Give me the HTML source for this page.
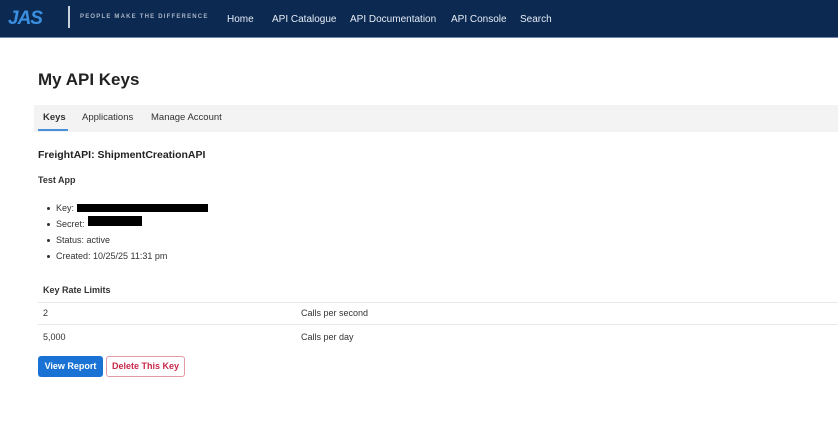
<!DOCTYPE html>
<html><head><meta charset="utf-8"><style>
*{margin:0;padding:0;box-sizing:border-box}
body{width:838px;height:424px;background:#fff;font-family:"Liberation Sans",sans-serif;color:#222;position:relative;overflow:hidden}
.hdr{position:absolute;left:0;top:0;width:838px;height:38px;background:#0b2951;border-bottom:1px solid #6f86a8}
.abs{position:absolute;white-space:nowrap}
.nav{color:#e6ecf5;font-size:10px;top:14px}
.tabbar{position:absolute;left:34px;top:105px;width:804px;height:27px;background:#f3f3f3}
.tab{font-size:9.5px;color:#333;top:112px}
.sm{font-size:9px;color:#333}
.b{font-weight:bold}
.bar{position:absolute;background:#000}
.line{position:absolute;left:38px;width:800px;height:1px;background:#e8e8e8}
.dot{position:absolute;width:3px;height:3px;border-radius:50%;background:#333}
</style></head><body>
<div class="hdr"></div>
<div class="abs" style="left:8px;top:8px;color:#3a8fe0;font-weight:bold;font-style:italic;font-size:19px;letter-spacing:-1px">JAS</div>
<div class="abs" style="left:68px;top:6px;width:2px;height:22px;background:#c8d0dc"></div>
<div class="abs" style="left:80px;top:14px;color:#a8b4c6;font-size:6px;font-weight:bold;letter-spacing:1.2px">PEOPLE MAKE THE DIFFERENCE</div>
<div class="abs nav" style="left:227px">Home</div>
<div class="abs nav" style="left:272px">API Catalogue</div>
<div class="abs nav" style="left:350px">API Documentation</div>
<div class="abs nav" style="left:451px">API Console</div>
<div class="abs nav" style="left:520px">Search</div>
<div class="abs b" style="left:38px;top:70px;font-size:17px;color:#222">My API Keys</div>
<div class="tabbar"></div>
<div class="abs tab b" style="left:43px">Keys</div>
<div class="abs" style="left:38px;top:129px;width:30px;height:2px;background:#4a90d9"></div>
<div class="abs tab" style="left:82px">Applications</div>
<div class="abs tab" style="left:151px">Manage Account</div>
<div class="abs b" style="left:38px;top:149px;font-size:10.5px">FreightAPI: ShipmentCreationAPI</div>
<div class="abs b sm" style="left:38px;top:175px">Test App</div>
<div class="dot" style="left:47px;top:207px"></div>
<div class="abs sm" style="left:56px;top:203px">Key:</div>
<div class="bar" style="left:77px;top:204px;width:131px;height:8px"></div>
<div class="dot" style="left:47px;top:223px"></div>
<div class="abs sm" style="left:56px;top:219px">Secret:</div>
<div class="bar" style="left:88px;top:216px;width:54px;height:10px"></div>
<div class="dot" style="left:47px;top:239px"></div>
<div class="abs sm" style="left:56px;top:235px">Status: active</div>
<div class="dot" style="left:47px;top:255px"></div>
<div class="abs sm" style="left:56px;top:251px">Created: 10/25/25 11:31 pm</div>
<div class="abs b sm" style="left:43px;top:285px">Key Rate Limits</div>
<div class="line" style="top:302px"></div>
<div class="abs sm" style="left:43px;top:308px">2</div>
<div class="abs sm" style="left:301px;top:308px">Calls per second</div>
<div class="line" style="top:324px"></div>
<div class="abs sm" style="left:43px;top:332px">5,000</div>
<div class="abs sm" style="left:301px;top:332px">Calls per day</div>
<div class="abs b" style="left:38px;top:356px;width:65px;height:21px;background:#1a73d4;border-radius:3px;color:#fff;font-size:9px;line-height:21px;text-align:center">View Report</div>
<div class="abs b" style="left:106px;top:356px;width:79px;height:21px;border:1px solid #e29aa6;border-radius:3px;color:#c8284a;font-size:9px;line-height:19px;text-align:center">Delete This Key</div>
</body></html>
